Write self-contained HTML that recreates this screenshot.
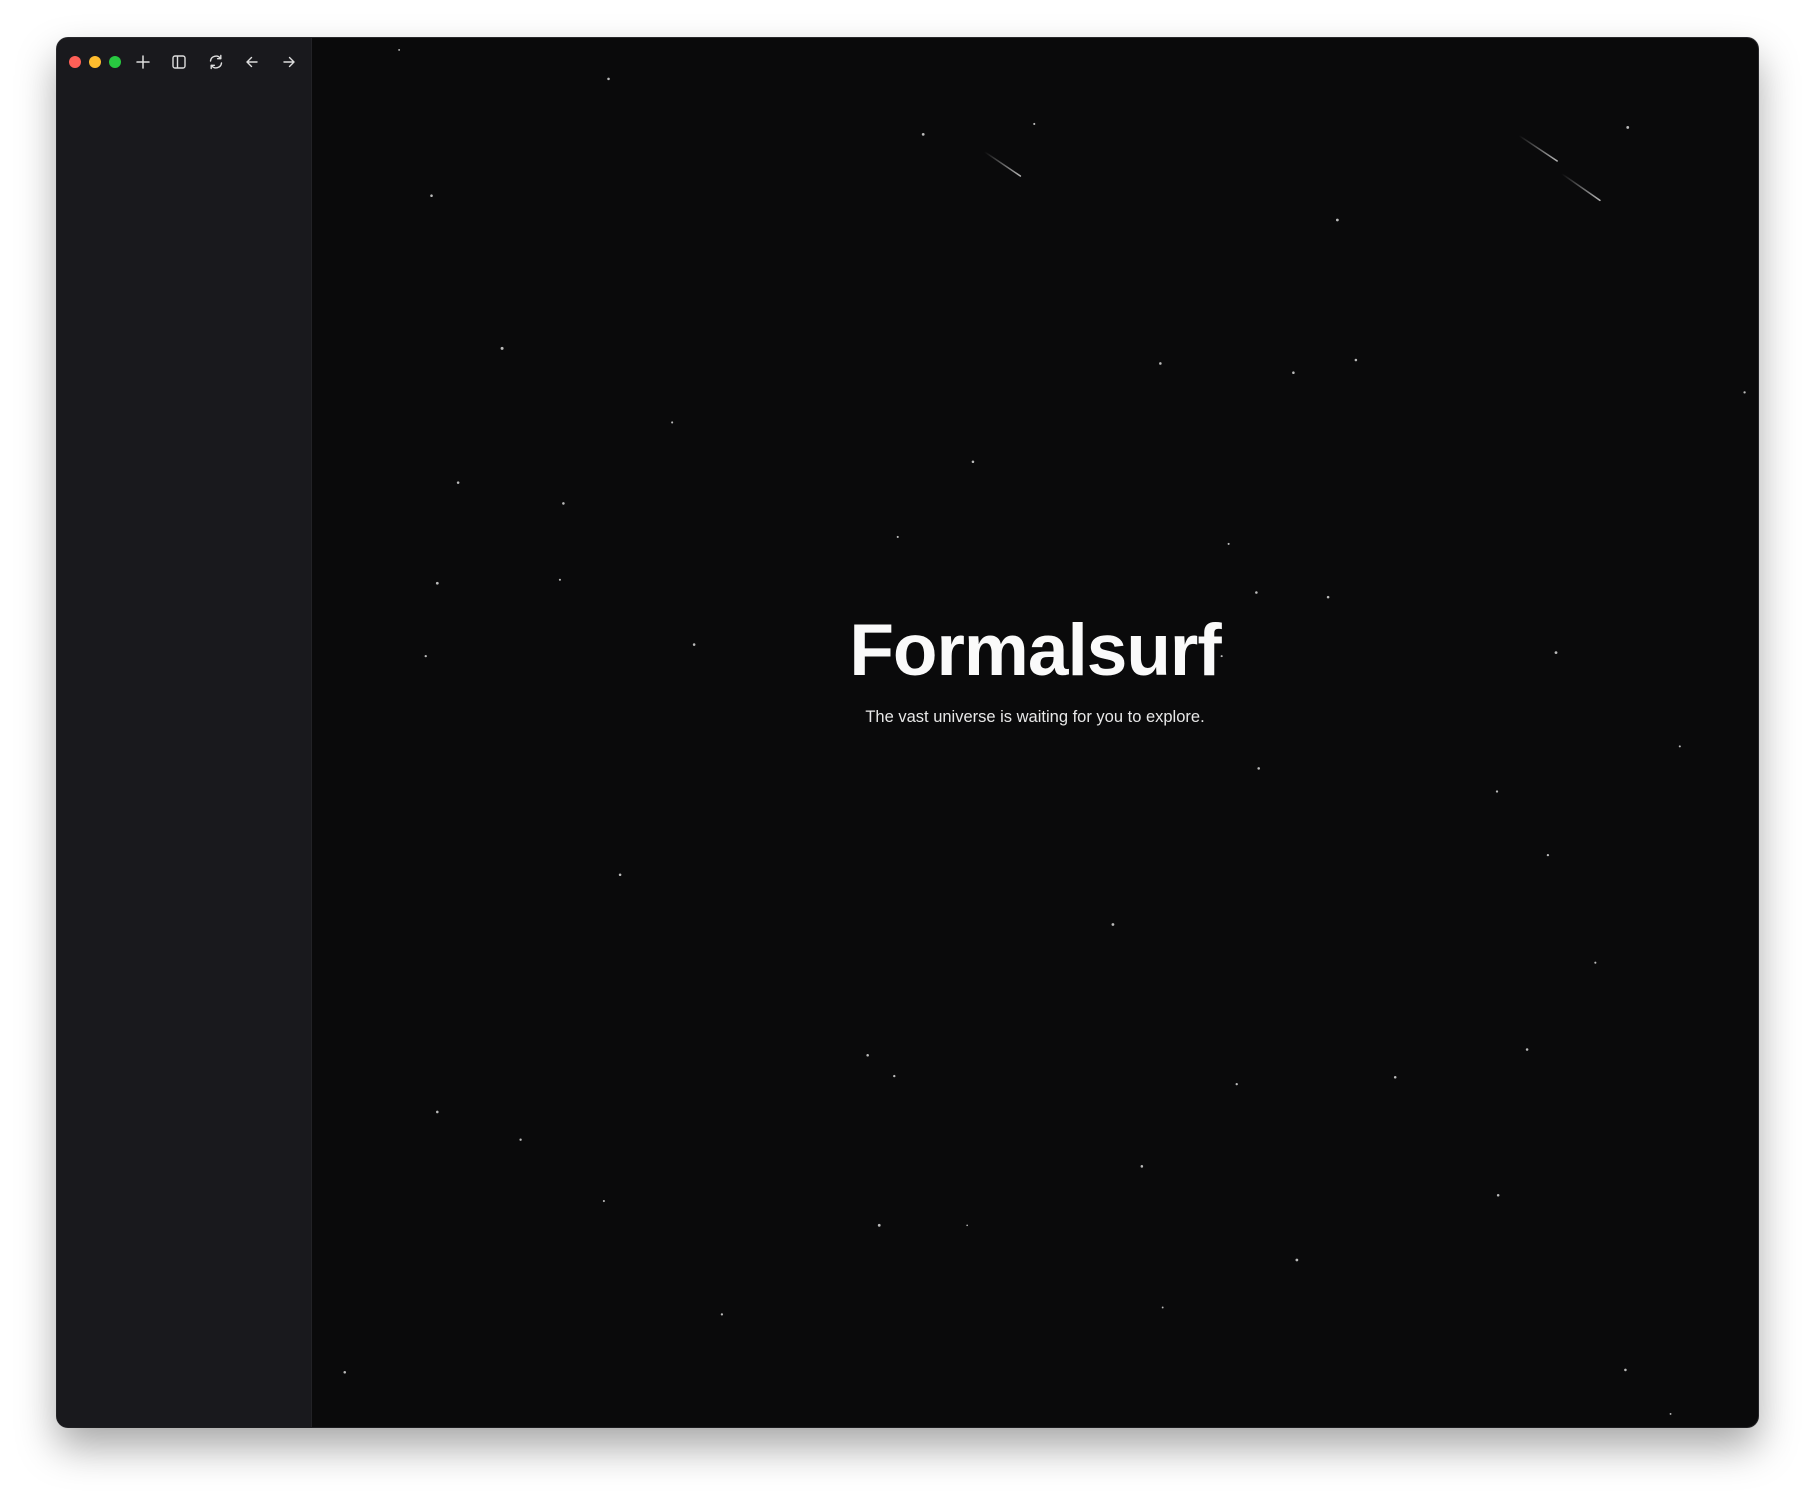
<!DOCTYPE html>
<html><head><meta charset="utf-8"><style>
html,body{margin:0;padding:0;width:1814px;height:1502px;background:#fff;overflow:hidden}
.win{position:absolute;left:57px;top:38px;width:1701px;height:1389px;border-radius:11px;background:#0a0a0b;overflow:hidden;box-shadow:0 20px 40px rgba(0,0,0,.35),0 0 0 1px #2a2a2e;}
.side{position:absolute;left:0;top:0;width:254px;height:100%;background:#19191d;border-right:1px solid #222226}
.dot{position:absolute;top:18px;width:12px;height:12px;border-radius:50%}
.title{position:absolute;left:255px;right:0;top:609px;text-align:center;color:#fafafa;font:bold 73px "Liberation Sans",sans-serif;letter-spacing:-1px}
.sub{position:absolute;left:255px;right:0;top:708px;text-align:center;color:#e8e8e8;font:16.5px "Liberation Sans",sans-serif}
svg.ic{position:absolute}
</style></head><body>
<svg style="position:absolute;left:0;top:0;z-index:1" width="1814" height="1502" viewBox="0 0 1568 1298">
<defs>
<linearGradient id="g1" x1="0" y1="0" x2="1" y2="1"><stop offset="0" stop-color="#fff" stop-opacity="0"/><stop offset="1" stop-color="#fff" stop-opacity="0.7"/></linearGradient>
</defs>
<g fill="#bbb">
<circle cx="526" cy="68" r="1.1"/><circle cx="798" cy="116" r="1.2"/><circle cx="894" cy="107" r="0.9"/><circle cx="1407" cy="110" r="1.2"/><circle cx="373" cy="169" r="1.1"/><circle cx="1156" cy="190" r="1.2"/><circle cx="434" cy="301" r="1.3"/><circle cx="1003" cy="314" r="1.1"/><circle cx="1118" cy="322" r="1.1"/><circle cx="1172" cy="311" r="1.1"/><circle cx="1508" cy="339" r="1"/><circle cx="581" cy="365" r="0.9"/><circle cx="841" cy="399" r="1.1"/><circle cx="396" cy="417" r="1.1"/><circle cx="487" cy="435" r="1.1"/><circle cx="776" cy="464" r="0.9"/><circle cx="1062" cy="470" r="0.9"/><circle cx="378" cy="504" r="1.2"/><circle cx="484" cy="501" r="0.9"/><circle cx="1086" cy="512" r="1.1"/><circle cx="1148" cy="516" r="1.1"/><circle cx="600" cy="557" r="1.1"/><circle cx="368" cy="567" r="1"/><circle cx="1345" cy="564" r="1.2"/><circle cx="1056" cy="567" r="0.9"/><circle cx="1452" cy="645" r="0.9"/><circle cx="1088" cy="664" r="1.1"/><circle cx="1294" cy="684" r="1"/><circle cx="1338" cy="739" r="1"/><circle cx="536" cy="756" r="1.1"/><circle cx="962" cy="799" r="1.2"/><circle cx="1379" cy="832" r="0.9"/><circle cx="1320" cy="907" r="1.1"/><circle cx="750" cy="912" r="1.1"/><circle cx="773" cy="930" r="1"/><circle cx="1069" cy="937" r="1"/><circle cx="1206" cy="931" r="1.1"/><circle cx="378" cy="961" r="1.1"/><circle cx="450" cy="985" r="1"/><circle cx="987" cy="1008" r="1.1"/><circle cx="522" cy="1038" r="0.9"/><circle cx="1295" cy="1033" r="1.1"/><circle cx="760" cy="1059" r="1.2"/><circle cx="836" cy="1059" r="0.7"/><circle cx="1121" cy="1089" r="1.2"/><circle cx="624" cy="1136" r="1"/><circle cx="1005" cy="1130" r="0.8"/><circle cx="1405" cy="1184" r="1.1"/><circle cx="298" cy="1186" r="1.1"/><circle cx="1444" cy="1222" r="0.8"/><circle cx="345" cy="43" r="0.8"/>
</g>
<g stroke-linecap="round" stroke-width="1.3">
<line x1="851" y1="131" x2="882" y2="152" stroke="url(#g1)"/>
<line x1="1313" y1="117" x2="1346" y2="139" stroke="url(#g1)"/>
<line x1="1350" y1="150" x2="1383" y2="173" stroke="url(#g1)"/>
</g>
</svg>
<div class="win">
<div class="side"></div>
<div class="dot" style="left:12px;background:#fe5f57"></div>
<div class="dot" style="left:32px;background:#febc2e"></div>
<div class="dot" style="left:52px;background:#28c840"></div>
<svg class="ic" style="left:78px;top:16px" width="16" height="16" viewBox="0 0 16 16" fill="none" stroke="#ddd" stroke-width="1.5" stroke-linecap="round"><path d="M8 2v12M2 8h12"/></svg>
<svg class="ic" style="left:114px;top:16px" width="16" height="16" viewBox="0 0 16 16" fill="none" stroke="#ddd" stroke-width="1.4"><rect x="2" y="2" width="12" height="12" rx="2"/><path d="M6.5 2v12"/></svg>
<svg class="ic" style="left:151px;top:16px" width="16" height="16" viewBox="0 0 16 16" fill="none" stroke="#ddd" stroke-width="1.4" stroke-linecap="round" stroke-linejoin="round"><path d="M2.5 7a5.5 5.5 0 0 1 10-2.5M13.5 9a5.5 5.5 0 0 1-10 2.5"/><path d="M12.8 1.5v3.2H9.6M3.2 14.5v-3.2h3.2"/></svg>
<svg class="ic" style="left:187px;top:16px" width="16" height="16" viewBox="0 0 16 16" fill="none" stroke="#ddd" stroke-width="1.4" stroke-linecap="round" stroke-linejoin="round"><path d="M13 8H3M7.5 3.5L3 8l4.5 4.5"/></svg>
<svg class="ic" style="left:224px;top:16px" width="16" height="16" viewBox="0 0 16 16" fill="none" stroke="#ddd" stroke-width="1.4" stroke-linecap="round" stroke-linejoin="round"><path d="M3 8h10M8.5 3.5L13 8l-4.5 4.5"/></svg>
</div>
<div style="position:absolute;left:57px;top:0;width:1701px;height:1502px;z-index:2">
<div class="title">Formalsurf</div>
<div class="sub">The vast universe is waiting for you to explore.</div>
</div>
</body></html>
